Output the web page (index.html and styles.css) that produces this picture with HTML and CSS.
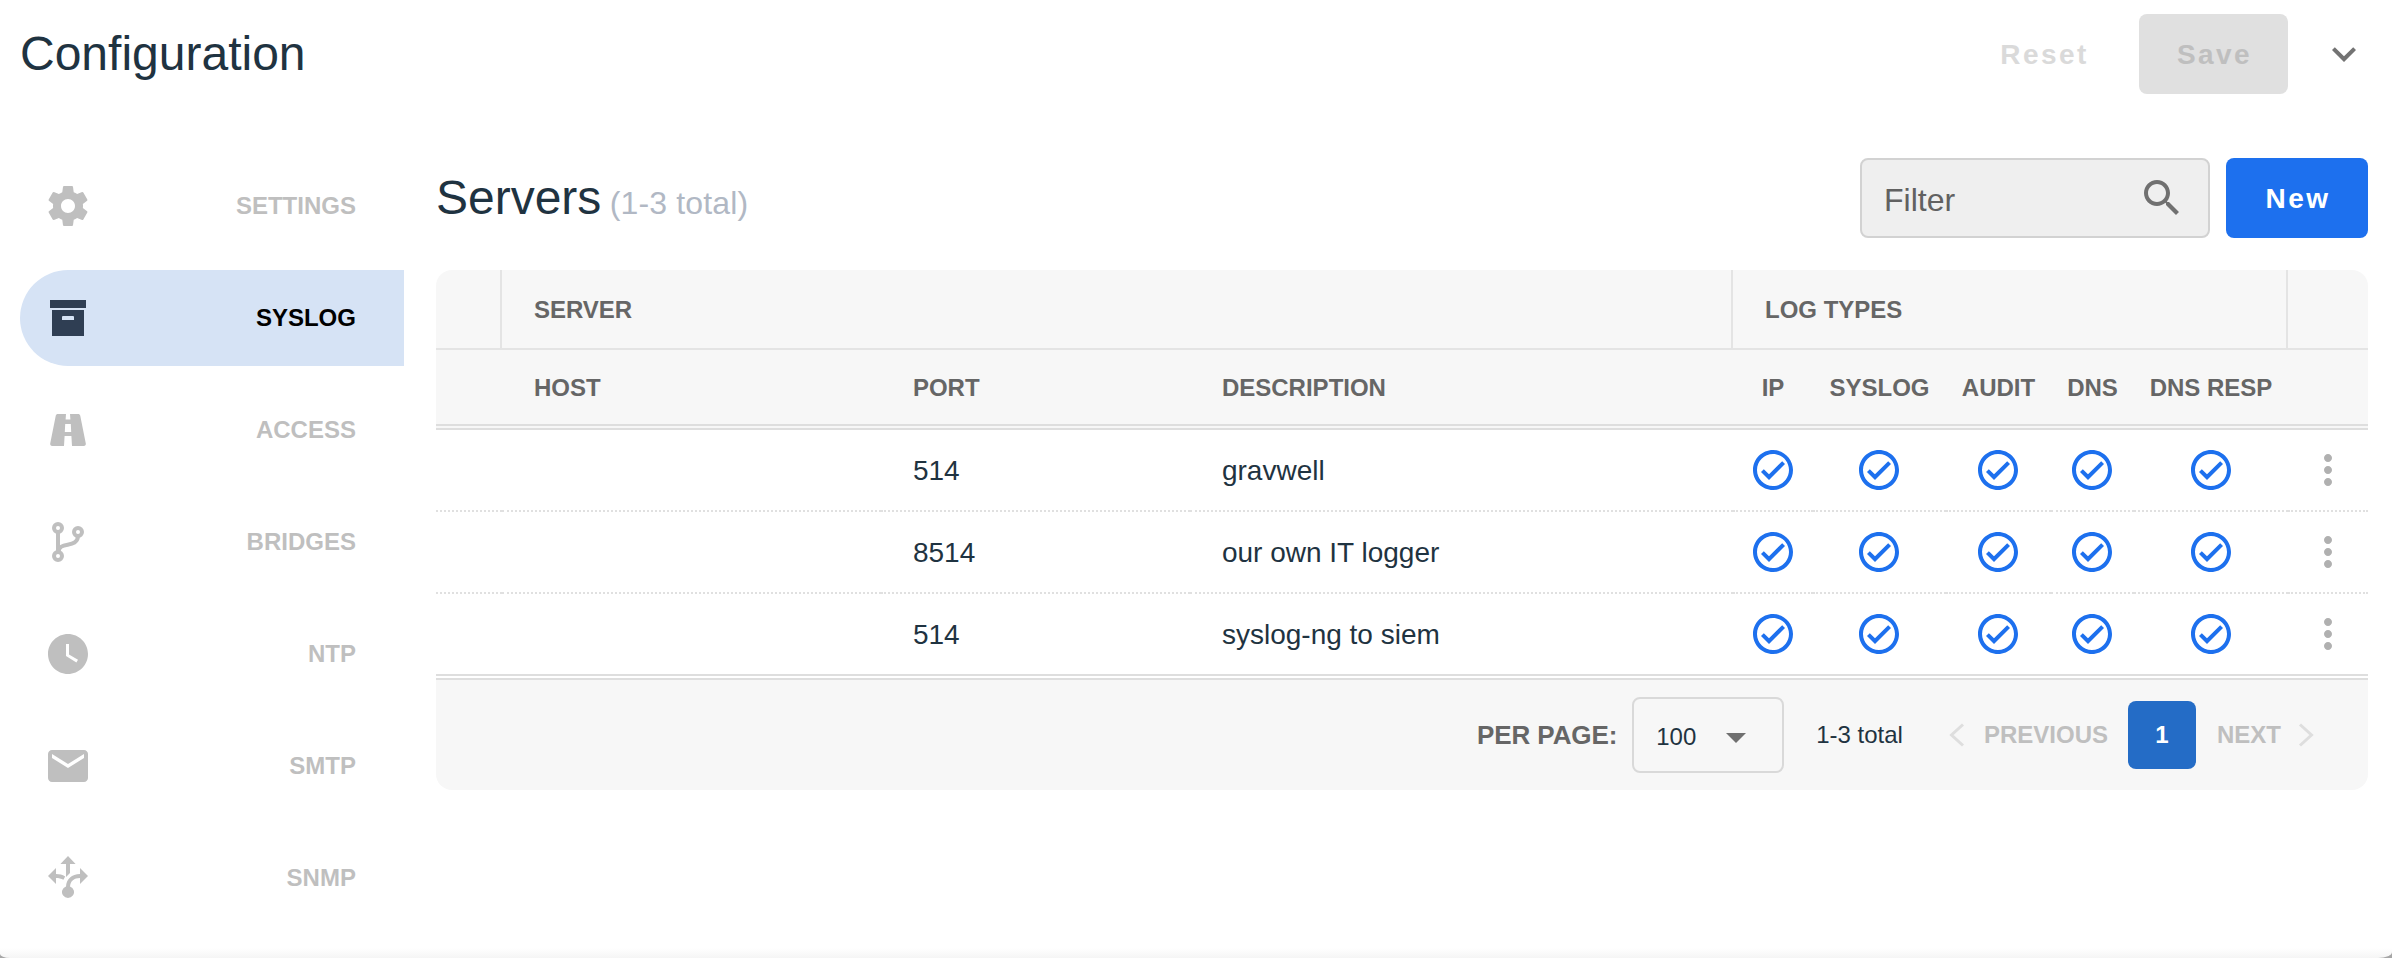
FILE: index.html
```html
<!DOCTYPE html>
<html lang="en">
<head>
  <meta charset="utf-8">
  <title>Configuration</title>
  <link rel="stylesheet" href="styles.css">
</head>
<body>
  <svg class="defs" width="0" height="0">
    <symbol id="check" viewBox="0 0 24 24"><path d="M16.59 7.58L10 14.17l-2.59-2.58L6 13l4 4 8-8zM12 2C6.48 2 2 6.48 2 12s4.48 10 10 10 10-4.48 10-10S17.52 2 12 2zm0 18c-4.42 0-8-3.58-8-8s3.58-8 8-8 8 3.58 8 8-3.58 8-8 8z"/></symbol>
    <symbol id="more" viewBox="0 0 24 24"><path d="M12 8c1.1 0 2-.9 2-2s-.9-2-2-2-2 .9-2 2 .9 2 2 2zm0 2c-1.1 0-2 .9-2 2s.9 2 2 2 2-.9 2-2-.9-2-2-2zm0 6c-1.1 0-2 .9-2 2s.9 2 2 2 2-.9 2-2-.9-2-2-2z"/></symbol>
  </svg>
  <div class="window">
  <div class="page">
    <header class="topbar">
      <h1>Configuration</h1>
      <button class="btn reset" disabled>Reset</button>
      <button class="btn save" disabled>Save</button>
      <svg class="icon expand" viewBox="0 0 24 24"><path d="M16.59 8.59L12 13.17 7.41 8.59 6 10l6 6 6-6z"/></svg>
    </header>

    <div class="content">
      <nav class="sidenav">
        <a class="item">
          <svg class="icon" viewBox="0 0 24 24"><path d="M19.43 12.98c.04-.32.07-.64.07-.98s-.03-.66-.07-.98l2.11-1.65c.19-.15.24-.42.12-.64l-2-3.46c-.12-.22-.39-.3-.61-.22l-2.49 1c-.52-.4-1.08-.73-1.69-.98l-.38-2.65C14.46 2.18 14.25 2 14 2h-4c-.25 0-.46.18-.49.42l-.38 2.65c-.61.25-1.17.59-1.69.98l-2.49-1c-.23-.09-.49 0-.61.22l-2 3.46c-.13.22-.07.49.12.64l2.11 1.65c-.04.32-.07.65-.07.98s.03.66.07.98l-2.11 1.65c-.19.15-.24.42-.12.64l2 3.46c.12.22.39.3.61.22l2.49-1c.52.4 1.08.73 1.69.98l.38 2.65c.03.24.24.42.49.42h4c.25 0 .46-.18.49-.42l.38-2.65c.61-.25 1.17-.59 1.69-.98l2.49 1c.23.09.49 0 .61-.22l2-3.46c.12-.22.07-.49-.12-.64l-2.11-1.65zM12 15.5c-1.93 0-3.5-1.57-3.5-3.5s1.57-3.5 3.5-3.5 3.5 1.57 3.5 3.5-1.57 3.5-3.5 3.5z"/></svg>
          <span>SETTINGS</span>
        </a>
        <a class="item active">
          <svg class="icon" viewBox="0 0 24 24"><path d="M3 3h18v4H3zM4 8h16v13H4zM9.5 11a.5.5 0 0 0-.5.5V13h6v-1.5a.5.5 0 0 0-.5-.5z"/></svg>
          <span>SYSLOG</span>
        </a>
        <a class="item">
          <svg class="icon" viewBox="0 0 24 24"><path d="M18.1 4.8c-.1-.5-.5-.8-1-.8H13l.2 2.700h-2.400L11 4H6.900c-.5 0-.9.3-1 .8L3.100 18.800c-.1.600.3 1.200 1 1.200H10l.3-5h3.400l.3 5h5.900c.7 0 1.100-.6 1-1.200zM10.400 13l.2-4h2.800l.2 4z"/></svg>
          <span>ACCESS</span>
        </a>
        <a class="item">
          <svg class="icon" viewBox="0 0 24 24"><g fill="none" stroke="currentColor" stroke-width="2"><circle cx="7" cy="5" r="2"/><circle cx="7" cy="19" r="2"/><circle cx="17" cy="7" r="2"/><path d="M7 7v10M7.300 17C7.300 11.300 16.700 15.500 17 9"/></g></svg>
          <span>BRIDGES</span>
        </a>
        <a class="item">
          <svg class="icon" viewBox="0 0 24 24"><path d="M12 2C6.500 2 2 6.500 2 12s4.500 10 10 10 10-4.500 10-10S17.500 2 12 2zm4.200 14.200L11 13V7h1.500v5.200l4.500 2.700z"/></svg>
          <span>NTP</span>
        </a>
        <a class="item">
          <svg class="icon" viewBox="0 0 24 24"><path d="M20 4H4c-1.100 0-2 .9-2 2v12c0 1.100.9 2 2 2h16c1.100 0 2-.9 2-2V6c0-1.100-.9-2-2-2zm0 4l-8 5-8-5V6l8 5 8-5z"/></svg>
          <span>SMTP</span>
        </a>
        <a class="item">
          <svg class="icon" viewBox="0 0 24 24"><path d="M12 1l3.800 4H13v4.500l-2 2V5H8.200zM2 11l4-4v3c1.800 0 3.200.4 4.600 1.200l-.9 1.700C8.600 12.300 7.400 12 6 12v3zM22 11l-4-4v3c-4.200 0-6.700 2.500-7 6.200a3 3 0 1 0 2 0c.3-2.700 2-4.200 5-4.200v3z"/></svg>
          <span>SNMP</span>
        </a>
      </nav>

      <main class="main">
        <div class="toolbar">
          <h2>Servers <small>(1-3 total)</small></h2>
          <div class="filter">
            <span>Filter</span>
            <svg class="icon" viewBox="0 0 24 24"><path d="M15.5 14h-.79l-.28-.27C15.41 12.59 16 11.11 16 9.5 16 5.91 13.09 3 9.5 3S3 5.91 3 9.5 5.91 16 9.5 16c1.61 0 3.09-.59 4.23-1.57l.27.28v.79l5 4.99L20.49 19l-4.99-5zm-6 0C7.01 14 5 11.99 5 9.5S7.01 5 9.5 5 14 7.01 14 9.5 11.99 14 9.5 14z"/></svg>
          </div>
          <button class="btn new">New</button>
        </div>

        <table class="servers">
          <colgroup>
            <col class="c-blank"><col class="c-host"><col class="c-port"><col class="c-desc">
            <col class="c-ip"><col class="c-syslog"><col class="c-audit"><col class="c-dns"><col class="c-resp"><col class="c-menu">
          </colgroup>
          <thead>
            <tr class="groups">
              <th></th>
              <th colspan="3">SERVER</th>
              <th colspan="5">LOG TYPES</th>
              <th></th>
            </tr>
            <tr class="labels">
              <th></th>
              <th>HOST</th>
              <th>PORT</th>
              <th>DESCRIPTION</th>
              <th class="flag">IP</th>
              <th class="flag">SYSLOG</th>
              <th class="flag">AUDIT</th>
              <th class="flag">DNS</th>
              <th class="flag">DNS RESP</th>
              <th></th>
            </tr>
          </thead>
          <tbody>
            <tr>
              <td></td><td></td><td>514</td><td>gravwell</td>
              <td class="flag"><svg class="icon"><use href="#check"/></svg></td>
              <td class="flag"><svg class="icon"><use href="#check"/></svg></td>
              <td class="flag"><svg class="icon"><use href="#check"/></svg></td>
              <td class="flag"><svg class="icon"><use href="#check"/></svg></td>
              <td class="flag"><svg class="icon"><use href="#check"/></svg></td>
              <td class="menu"><svg class="icon"><use href="#more"/></svg></td>
            </tr>
            <tr>
              <td></td><td></td><td>8514</td><td>our own IT logger</td>
              <td class="flag"><svg class="icon"><use href="#check"/></svg></td>
              <td class="flag"><svg class="icon"><use href="#check"/></svg></td>
              <td class="flag"><svg class="icon"><use href="#check"/></svg></td>
              <td class="flag"><svg class="icon"><use href="#check"/></svg></td>
              <td class="flag"><svg class="icon"><use href="#check"/></svg></td>
              <td class="menu"><svg class="icon"><use href="#more"/></svg></td>
            </tr>
            <tr>
              <td></td><td></td><td>514</td><td>syslog-ng to siem</td>
              <td class="flag"><svg class="icon"><use href="#check"/></svg></td>
              <td class="flag"><svg class="icon"><use href="#check"/></svg></td>
              <td class="flag"><svg class="icon"><use href="#check"/></svg></td>
              <td class="flag"><svg class="icon"><use href="#check"/></svg></td>
              <td class="flag"><svg class="icon"><use href="#check"/></svg></td>
              <td class="menu"><svg class="icon"><use href="#more"/></svg></td>
            </tr>
          </tbody>
        </table>

        <footer class="pager">
          <span class="per-page">PER PAGE:</span>
          <div class="select">
            <span>100</span>
            <svg class="icon" viewBox="0 0 24 24"><path d="M7 10l5 5 5-5z"/></svg>
          </div>
          <span class="total">1-3 total</span>
          <svg class="chev" viewBox="0 0 16 24"><path d="M14 1.500L2.500 12 14 22.500"/></svg>
          <span class="step prev">PREVIOUS</span>
          <span class="current">1</span>
          <span class="step next">NEXT</span>
          <svg class="chev" viewBox="0 0 16 24"><path d="M2 1.500L13.500 12 2 22.500"/></svg>
        </footer>
      </main>
    </div>
  </div>
  </div>
</body>
</html>
```

FILE: styles.css
```css
* {
  box-sizing: border-box;
}

body {
  margin: 0;
  background: #fff;
  color: #1f3341;
  font-family: "Liberation Sans", Arial, sans-serif;
  font-size: 28px;
}

.defs {
  display: block;
}

.window {
  height: 958px;
  background: #a6a6a6;
}

.page {
  height: 958px;
  padding: 14px 24px 0 20px;
  border-radius: 0 0 14px 10px / 0 0 6px 4px;
  background: linear-gradient(#fff, #fff 948px, #f5f5f5);
  overflow: hidden;
}

.icon {
  display: block;
  width: 48px;
  height: 48px;
  fill: currentColor;
}

h1, h2 {
  margin: 0 auto 0 0;
  font-size: 48px;
  font-weight: normal;
  line-height: 80px;
}

h2 small {
  margin-left: -5px;
  color: #b1b8c4;
  font-size: 32px;
  letter-spacing: 0.15px;
}

.btn {
  height: 80px;
  padding: 2px 0 0 2px;
  border: 0;
  border-radius: 8px;
  font: bold 28px "Liberation Sans", Arial, sans-serif;
  letter-spacing: 2.4px;
}

/* header */
.topbar {
  display: flex;
  align-items: center;
  height: 80px;
}

.reset {
  width: 165px;
  margin-right: 13px;
  background: none;
  color: #dadada;
}

.save {
  width: 149px;
  margin-right: 32px;
  background: #e0e0e0;
  color: #bfbfbf;
}

.new {
  width: 142px;
  background: #1d70ee;
  color: #fff;
}

.expand {
  color: #737373;
}

/* side navigation */
.content {
  display: flex;
  gap: 32px;
  padding-top: 64px;
}

.sidenav {
  display: flex;
  flex-direction: column;
  gap: 16px;
  width: 384px;
}

.item {
  display: flex;
  align-items: center;
  justify-content: space-between;
  height: 96px;
  padding: 0 48px 0 24px;
  color: #bfbfbf;
  font-size: 24px;
  font-weight: bold;
}

.item.active {
  border-radius: 48px 0 0 48px;
  background: #d6e3f5;
  color: #000;
}

.active .icon {
  color: #2f3e53;
}

/* servers */
.main {
  flex: 1;
}

.toolbar {
  display: flex;
  height: 80px;
  margin-bottom: 32px;
}

.filter {
  display: flex;
  align-items: center;
  justify-content: space-between;
  width: 350px;
  margin-right: 16px;
  padding: 0 22px;
  border: 2px solid #d2d2d2;
  border-radius: 8px;
  background: #efefef;
  color: #616161;
  font-size: 32px;
}

.filter .icon {
  color: #707070;
}

.filter span {
  padding-top: 4px;
}

.servers {
  width: 1932px;
  table-layout: fixed;
  border-collapse: separate;
  border-spacing: 0;
}

.c-blank { width: 66px; }
.c-host { width: 379px; }
.c-port { width: 309px; }
.c-desc { width: 543px; }
.c-ip { width: 80px; }
.c-syslog { width: 133px; }
.c-audit { width: 105px; }
.c-dns { width: 83px; }
.c-resp { width: 154px; }
.c-menu { width: 80px; }

th {
  padding: 2px 0 0 32px;
  background: #f7f7f7;
  color: #666;
  font-size: 24px;
  text-align: left;
  white-space: nowrap;
}

.groups th {
  height: 80px;
  border-right: 2px solid #e4e4e4;
  border-bottom: 2px solid #e4e4e4;
}

.groups th:first-child {
  border-top-left-radius: 16px;
}

.groups th:last-child {
  border-top-right-radius: 16px;
  border-right: 0;
}

.labels th {
  height: 80px;
  border-bottom: 6px double #dedede;
}

td {
  height: 82px;
  padding: 2px 0 0 32px;
  border-bottom: 2px dotted #e0e0e0;
}

tbody tr:last-child td {
  height: 86px;
  border-bottom: 6px double #dedede;
}

th.flag {
  padding: 2px 0 0;
  text-align: center;
}

td.flag {
  padding: 0;
}

.flag .icon {
  margin: 0 auto;
  color: #1d70ee;
}

td.menu {
  padding: 0 0 0 16px;
  color: #b0b0b0;
}

/* pagination */
.pager {
  display: flex;
  align-items: center;
  justify-content: flex-end;
  height: 110px;
  padding-right: 54px;
  border-radius: 0 0 16px 16px;
  background: #f7f7f7;
  font-size: 24px;
}

.per-page {
  margin-right: 15px;
  color: #666;
  font-size: 26px;
  font-weight: bold;
  letter-spacing: -0.1px;
}

.select {
  display: flex;
  align-items: center;
  width: 152px;
  height: 76px;
  margin-right: 32px;
  padding: 4px 0 0 22px;
  border: 2px solid #d9d9d9;
  border-radius: 8px;
}

.select .icon {
  margin-left: 16px;
  color: #707070;
}

.total {
  margin-right: 46px;
}

.chev {
  width: 16px;
  height: 24px;
  fill: none;
  stroke: #dedede;
  stroke-width: 3;
}

.step {
  color: #bfbfbf;
  font-weight: bold;
}

.prev {
  margin: 0 20px 0 19px;
}

.next {
  margin: 0 17px 0 21px;
}

.current {
  width: 68px;
  border-radius: 8px;
  background: #246cc6;
  color: #fff;
  font-weight: bold;
  line-height: 68px;
  text-align: center;
}
```
